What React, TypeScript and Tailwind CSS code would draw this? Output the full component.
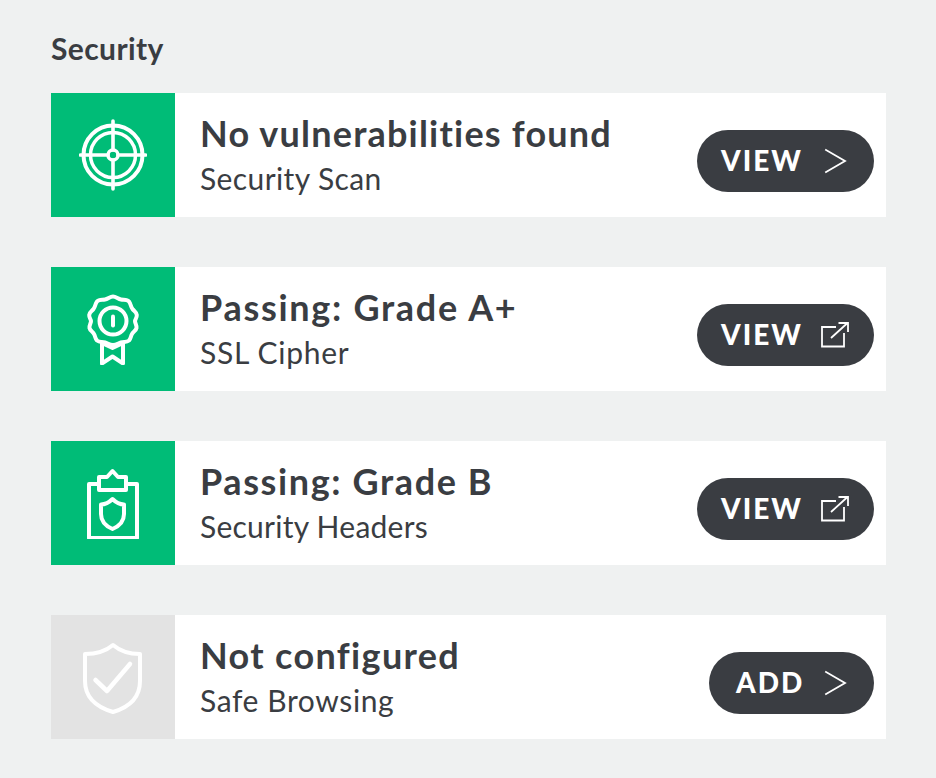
import React from "react";

const Target = () => (
  <svg width="68" height="72" viewBox="0 0 68 72" fill="none" stroke="white" strokeLinecap="round">
    <circle cx="34" cy="36" r="29.5" strokeWidth="4" />
    <circle cx="34" cy="36" r="22.5" strokeWidth="3.500" />
    <circle cx="34" cy="36" r="5" strokeWidth="3.500" />
    <path d="M34 2V31M34 41V70M1.500 36H29M39 36H66.500" strokeWidth="3.600" />
  </svg>
);

const Ribbon = () => (
  <svg width="52" height="72" viewBox="0 0 52 72" fill="none" stroke="white" strokeWidth="4" strokeLinecap="round" strokeLinejoin="round">
    <path d="M26 3.500C29 3.500 31 6 34 6.500C37 7 40 6 42 8.500C44 11 43.500 13.500 45.500 16C47 18 49.500 19 49.800 22C50 25 48 26.500 48 28C48 30.500 50 32 49.500 35C49 37.500 46.500 38.500 45 41C43.500 43.500 44 45.500 42 47.500C39.500 49.500 37 48.500 34 49.500C31 50.500 29 52 26 52C23 52 21 50.500 18 49.500C15 48.500 12.500 49.500 10 47.500C8 45.500 8.500 43.500 7 41C5.500 38.500 3 37.500 2.500 35C2 32 4 30.500 4 28C4 26.500 2 25 2.200 22C2.500 19 5 18 6.500 16C8.500 13.500 8 11 10 8.500C12 6 15 7 18 6.500C21 6 23 3.500 26 3.500Z" />
    <circle cx="26" cy="28" r="13.500" />
    <path d="M26 23.500V32.500" />
    <path d="M15 50V70.500L25.500 63.500L36 70.500V50" />
    <path d="M17 51L25.500 55L34 51" />
  </svg>
);

const Clip = () => (
  <svg width="52" height="72" viewBox="0 0 52 72" fill="none" stroke="white" strokeWidth="4" strokeLinecap="round" strokeLinejoin="round">
    <path d="M12 17H2V71H50V17H39" />
    <path d="M12 23V10H20L25.500 4L31 10H39V23Z" />
    <path d="M25.500 32C22.500 35 18.500 37.500 14 37.500V47C14 54.500 18.500 59 25.500 62C32.500 59 37 54.500 37 47V37.500C32.500 37.500 28.500 35 25.500 32Z" />
  </svg>
);

const ShieldCheck = () => (
  <svg width="62" height="76" viewBox="0 -2 62 76" fill="none" stroke="white" strokeWidth="4" strokeLinecap="round" strokeLinejoin="round">
    <path d="M31 4C24 10 14 13 3 13V40C3 56 14 66 31 71C48 66 58 56 58 40V13C47 13 38 10 31 4Z" />
    <path d="M13.500 39L25 50L48 23" strokeWidth="4.500" />
  </svg>
);

const Chevron = () => (
  <svg width="24" height="28" viewBox="0 0 24 28" fill="none" stroke="white" strokeWidth="1.800" strokeLinecap="square">
    <path d="M3 3L22 14L3 25" />
  </svg>
);

const External = () => (
  <svg width="30" height="28" viewBox="0 0 30 28" fill="none" stroke="white" strokeWidth="1.800">
    <path d="M24 12V25.500H2V6H16" />
    <path d="M11 17L27.500 2M18.500 2H28V11" />
  </svg>
);

const items = [
  { title: "No vulnerabilities found", titleTrack: "tracking-[1.2px]", sub: "Security Scan", subTrack: "tracking-[0.4px]", icon: <Target />, label: "VIEW", end: <Chevron />, green: true, btn: "w-[177px] pl-[24px] pr-[27px]" },
  { title: "Passing: Grade A+", titleTrack: "tracking-[1.700px]", sub: "SSL Cipher", subTrack: "tracking-[0.7px]", icon: <Ribbon />, label: "VIEW", end: <External />, green: true, btn: "w-[177px] pl-[24px] pr-[24px]" },
  { title: "Passing: Grade B", titleTrack: "tracking-[1.600px]", sub: "Security Headers", subTrack: "tracking-[0.25px]", icon: <Clip />, label: "VIEW", end: <External />, green: true, btn: "w-[177px] pl-[24px] pr-[24px]" },
  { title: "Not configured", titleTrack: "tracking-[1.350px]", sub: "Safe Browsing", subTrack: "tracking-[0.6px]", icon: <ShieldCheck />, label: "ADD", end: <Chevron />, green: false, btn: "w-[165px] pl-[27px] pr-[27px]" },
];

export default function App() {
  return (
    <div className="min-h-[778px] bg-[#eff1f1] pl-[51px] pr-[50px] pt-[29px] font-['Lato','Liberation_Sans',sans-serif] text-[#3a3d42]">
      <h2 className="mb-[26px] h-[38px] text-[30px] font-bold leading-[38px] tracking-[0.4px]">Security</h2>
      <div className="flex flex-col gap-[50px]">
        {items.map((item) => (
          <div key={item.sub} className="flex h-[124px] items-center bg-white pr-3">
            <div className={`flex h-[124px] w-[124px] shrink-0 items-center justify-center ${item.green ? "bg-[#00bc77]" : "bg-[#e3e3e3]"}`}>
              {item.icon}
            </div>
            <div className="ml-[25px] flex-1 pb-[3px]">
              <div className={`text-[36px] font-bold leading-[42px] ${item.titleTrack}`}>{item.title}</div>
              <div className={`mt-[6px] text-[30px] leading-[36px] ${item.subTrack}`}>{item.sub}</div>
            </div>
            <div className={`mt-3 flex h-[62px] items-center justify-between rounded-full bg-[#3a3d42] text-white ${item.btn}`}>
              <span className="mb-[2px] text-[28px] font-black leading-none tracking-[2px]">{item.label}</span>
              {item.end}
            </div>
          </div>
        ))}
      </div>
    </div>
  );
}
